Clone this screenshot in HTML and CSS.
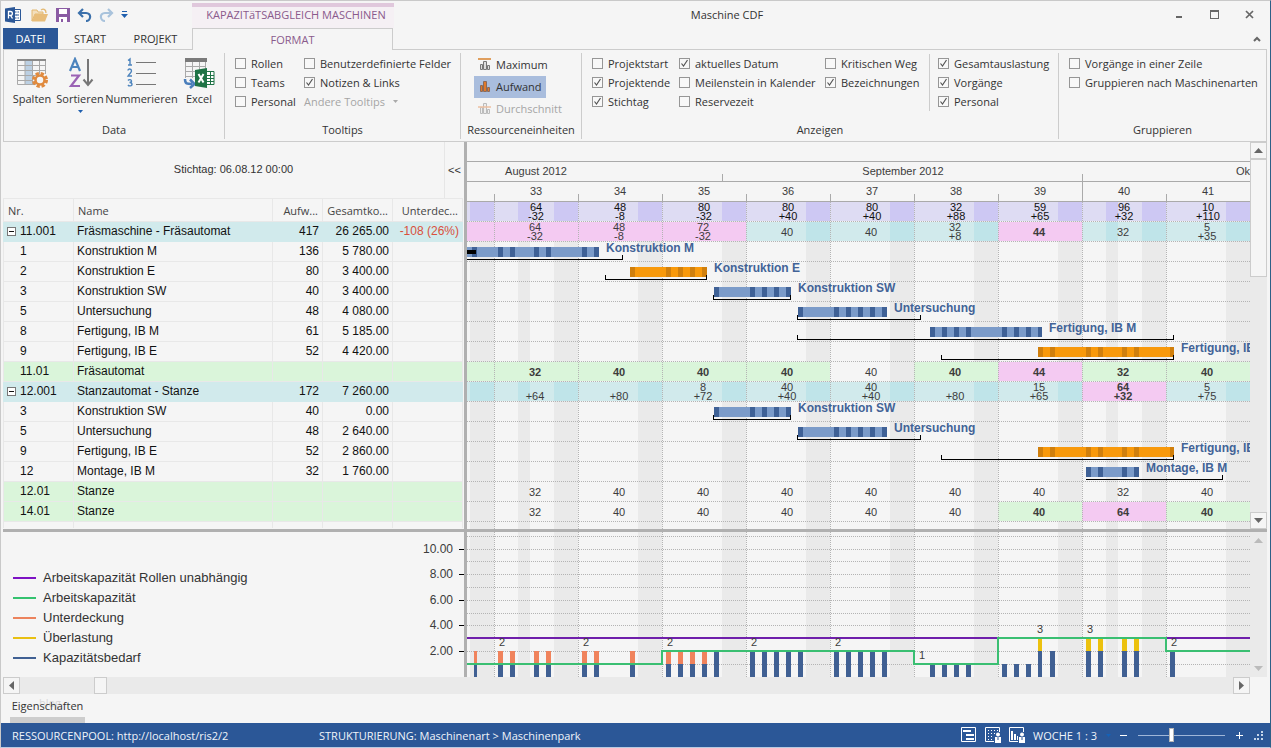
FILE: index.html
```
<!DOCTYPE html>
<html lang="de">
<head>
  <meta charset="UTF-8" />
  <meta name="viewport" content="width=device-width, initial-scale=1.0"/>
  <title>Maschine CDF</title>
  <link rel="stylesheet" href="styles.css">
</head>
<body>
  <header class="titlebar">
    <div class="quick-access">
      <button class="quick" aria-label="Rillsoft">
        <svg width="16" height="16" viewBox="0 0 16 16"><path d="M9 2.5h6.5v11H9" fill="#fff" stroke="#2b5797"/><path d="M10 5h1.500M12.500 5H14M10 8h1.500M11 8h3M10 11h1.500M12.500 11H14" stroke="#2b5797"/><path d="M0 1.500 10 0v16L0 14.500z" fill="#2b5797"/><path d="M3.500 11.500v-7h2a1.800 1.800 0 0 1 0 3.800h-2M5.500 8.300l2 3.200" fill="none" stroke="#fff" stroke-width="1.300"/></svg>
      </button>
      <button class="quick" aria-label="Öffnen">
        <svg width="18" height="16" viewBox="0 0 18 16"><path d="M1 14V3h5l1 2h5v2H4z" fill="#f3dfbd" stroke="#e3b871"/><path d="M1 14.500 4 7h13l-3 7.500z" fill="#e8bd7a"/><path d="M10 3c3-2 5 0 5 3" fill="none" stroke="#e3b871" stroke-width="1.300"/></svg>
      </button>
      <button class="quick" aria-label="Speichern">
        <svg width="14" height="14" viewBox="0 0 14 14"><path d="M0 0h14v14H0z" fill="#8a5ba3"/><path d="M3 1h8v5H3zM3 9h8v5H3z" fill="#fff"/><path d="M5 11h2v3H5z" fill="#8a5ba3"/></svg>
      </button>
      <button class="quick" aria-label="Rückgängig">
        <svg width="15" height="14" viewBox="0 0 15 14"><path d="M6 1 2 5l4 4M2 5h7c6 0 5 8 0 8" fill="none" stroke="#3b70ab" stroke-width="2.200"/></svg>
      </button>
      <button class="quick" aria-label="Wiederholen">
        <svg width="15" height="14" viewBox="0 0 15 14"><path d="M9 1l4 4-4 4M13 5H6C0 5 1 13 6 13" fill="none" stroke="#a9c3dc" stroke-width="2.200"/></svg>
      </button>
      <button class="quick" aria-label="Anpassen">
        <svg width="7" height="7" viewBox="0 0 7 7"><path d="M1 0h5v1H1zM0 3h7L3.500 7z" fill="#1f5fae"/></svg>
      </button>
    </div>
    <div class="context-title">KAPAZITäTSABGLEICH MASCHINEN</div>
    <h1>Maschine CDF</h1>
    <div class="window-buttons">
      <button aria-label="Minimieren"><svg width="9" height="9"><path d="M1 6h6v2H1z" fill="#666"/></svg></button>
      <button aria-label="Maximieren"><svg width="9" height="9"><path d="M0 0h9v9H0zM1 2v6h7V2z" fill="#666" fill-rule="evenodd"/></svg></button>
      <button aria-label="Schließen"><svg width="9" height="9"><path d="M1 1l7 7M8 1 1 8" stroke="#666" stroke-width="1.700"/></svg></button>
    </div>
  </header>

  <nav class="tabs">
    <button class="tab file">DATEI</button>
    <button class="tab start">START</button>
    <button class="tab project">PROJEKT</button>
    <button class="tab active">FORMAT</button>
    <button class="collapse" aria-label="Menüband reduzieren"><svg width="8" height="6"><path d="M1 5l3-3 3 3" fill="none" stroke="#666" stroke-width="2"/></svg></button>
  </nav>

  <section class="ribbon">
    <div class="group data">
      <div class="tools">
        <button class="big">
          <svg width="32" height="32" viewBox="0 0 32 32"><path d="M9 3h7v25H9z" fill="#bcd0e3"/><path d="M1.500 3v24.500h19M1 8.500h29M1 13.500h29M1 18.500h20M1 23.500h16M9 3v25M16.500 3v25M23.500 3v14M29.500 3v14" fill="none" stroke="#a9a9a9"/><path d="M1 2h29v2H1z" fill="#8a8a8a"/><circle cx="24" cy="23" r="6" fill="#f5f5f5" stroke="#e08a3e" stroke-width="4" stroke-dasharray="3 1.700"/><circle cx="24" cy="23" r="4.500" fill="#f5f5f5" stroke="#e08a3e" stroke-width="2.500"/></svg>
          <span>Spalten</span>
        </button>
        <button class="big">
          <svg width="32" height="32" viewBox="0 0 32 32"><path d="M6 14 11 2l5 12M8 10h6" fill="none" stroke="#4d84bd" stroke-width="2.200"/><path d="M7 18.500h8L7 29h9" fill="none" stroke="#9b63b5" stroke-width="2.200"/><path d="M24 2v26M19.500 22.500 24 28l4.500-5.500" fill="none" stroke="#777" stroke-width="2"/></svg>
          <span>Sortieren</span>
          <svg width="5" height="3"><path d="M0 0h5L2.500 3z" fill="#1f5fae"/></svg>
        </button>
        <button class="big">
          <svg width="32" height="32" viewBox="0 0 32 32"><g fill="none" stroke="#4d84bd" stroke-width="1.400"><path d="M2 3.500 4 2v6M2 8h4M2 13.500c0-2 3.500-2 3.500.500 0 1.500-2 2.500-3.500 5h4M2 23.500c1-1.500 3.500-1 3.500.500s-1 1.500-2 1.500c1 0 2.500.500 2.500 2s-3 2-4 .500"/></g><path d="M10 5.500h20M10 16.500h20M10 27.500h20" stroke="#777"/></svg>
          <span>Nummerieren</span>
        </button>
        <button class="big">
          <svg width="32" height="32" viewBox="0 0 32 32"><path d="M2.500 4v17M9.500 4v17M16.500 4v10M22.500 4v8M2 9.500h21M2 14.500h14M2 19.500h10" stroke="#a9a9a9"/><path d="M2 1h22v4H2z" fill="#7a7a7a"/><path d="M2 22c0 5 2 5 7 5M7 22.500l4.500 4.500L7 31" fill="none" stroke="#4a7ebb" stroke-width="2.500"/><path d="M23 14.500h8v13h-8z" fill="#fff" stroke="#1f7346"/><path d="M23 18.500h8M23 21.500h8M23 24.500h8M27.500 14v14" stroke="#1f7346"/><path d="M12 13l12-2v20l-12-2z" fill="#1f7346"/><path d="M15.500 17l5 8.500M20.500 17l-5 8.500" stroke="#fff" stroke-width="2"/></svg>
          <span>Excel</span>
        </button>
      </div>
      <h2>Data</h2>
    </div>

    <div class="group tooltips">
      <div class="checks">
        <label><input type="checkbox">Rollen</label>
        <label><input type="checkbox">Benutzerdefinierte Felder</label>
        <label><input type="checkbox">Teams</label>
        <label><input type="checkbox" checked>Notizen &amp; Links</label>
        <label><input type="checkbox">Personal</label>
        <button class="other" disabled>Andere Tooltips <svg width="5" height="3"><path d="M0 0h5L2.500 3z" fill="#aaa"/></svg></button>
      </div>
      <h2>Tooltips</h2>
    </div>

    <div class="group units">
      <div class="unit-list">
        <button class="unit"><svg width="14" height="14" viewBox="0 0 14 14"><path d="M2.500 7.500h2v5h-2zM5.500 4.500h3v8h-3zM9.500 8.500h2v4h-2z" fill="#ddd" stroke="#777"/><path d="M0 2h13" stroke="#d9822b" stroke-width="1.500"/></svg>Maximum</button>
        <button class="unit selected"><svg width="14" height="14" viewBox="0 0 14 14"><path d="M2.500 6.500h2v6h-2zM5.500 2.500h3v10h-3zM9.500 8.500h2v4h-2z" fill="#e0792a" stroke="#8a6a5a"/></svg>Aufwand</button>
        <button class="unit" disabled><svg width="14" height="14" viewBox="0 0 14 14"><path d="M2.500 6.500h2v6h-2zM5.500 2.500h3v10h-3zM9.500 8.500h2v4h-2z" fill="#eee" stroke="#bbb"/><path d="M0 6h13" stroke="#ecbfa0" stroke-width="1.500"/></svg>Durchschnitt</button>
      </div>
      <h2>Ressourceneinheiten</h2>
    </div>

    <div class="group show">
      <div class="checks">
        <label><input type="checkbox">Projektstart</label>
        <label><input type="checkbox" checked>aktuelles Datum</label>
        <label><input type="checkbox">Kritischen Weg</label>
        <label class="split"><input type="checkbox" checked>Gesamtauslastung</label>
        <label><input type="checkbox" checked>Projektende</label>
        <label><input type="checkbox">Meilenstein in Kalender</label>
        <label><input type="checkbox" checked>Bezeichnungen</label>
        <label class="split"><input type="checkbox" checked>Vorgänge</label>
        <label><input type="checkbox" checked>Stichtag</label>
        <label><input type="checkbox">Reservezeit</label>
        <span></span>
        <label class="split"><input type="checkbox" checked>Personal</label>
      </div>
      <h2>Anzeigen</h2>
    </div>

    <div class="group grouping">
      <div class="checks">
        <label><input type="checkbox">Vorgänge in einer Zeile</label>
        <label><input type="checkbox">Gruppieren nach Maschinenarten</label>
      </div>
      <h2>Gruppieren</h2>
    </div>
  </section>

  <main class="workspace">
    <section class="sheet">
      <div class="key-date">
        <span>Stichtag: 06.08.12 00:00</span>
        <button>&lt;&lt;</button>
      </div>
      <table>
        <colgroup>
          <col class="col-nr"><col><col class="col-effort"><col class="col-cost"><col class="col-cost">
        </colgroup>
        <thead>
          <tr><th>Nr.</th><th>Name</th><th class="num">Aufw...</th><th class="num">Gesamtko...</th><th class="num">Unterdec...</th></tr>
        </thead>
        <tbody>
          <tr class="machine"><td><button class="toggle" aria-label="Zuklappen"></button>11.001</td><td>Fräsmaschine - Fräsautomat</td><td>417</td><td>26 265.00</td><td class="short">-108 (26%)</td></tr>
          <tr><td>1</td><td>Konstruktion M</td><td>136</td><td>5 780.00</td><td></td></tr>
          <tr><td>2</td><td>Konstruktion E</td><td>80</td><td>3 400.00</td><td></td></tr>
          <tr><td>3</td><td>Konstruktion SW</td><td>40</td><td>3 400.00</td><td></td></tr>
          <tr><td>5</td><td>Untersuchung</td><td>48</td><td>4 080.00</td><td></td></tr>
          <tr><td>8</td><td>Fertigung, IB M</td><td>61</td><td>5 185.00</td><td></td></tr>
          <tr><td>9</td><td>Fertigung, IB E</td><td>52</td><td>4 420.00</td><td></td></tr>
          <tr class="person"><td>11.01</td><td>Fräsautomat</td><td></td><td></td><td></td></tr>
          <tr class="machine"><td><button class="toggle" aria-label="Zuklappen"></button>12.001</td><td>Stanzautomat - Stanze</td><td>172</td><td>7 260.00</td><td></td></tr>
          <tr><td>3</td><td>Konstruktion SW</td><td>40</td><td>0.00</td><td></td></tr>
          <tr><td>5</td><td>Untersuchung</td><td>48</td><td>2 640.00</td><td></td></tr>
          <tr><td>9</td><td>Fertigung, IB E</td><td>52</td><td>2 860.00</td><td></td></tr>
          <tr><td>12</td><td>Montage, IB M</td><td>32</td><td>1 760.00</td><td></td></tr>
          <tr class="person"><td>12.01</td><td>Stanze</td><td></td><td></td><td></td></tr>
          <tr class="person"><td>14.01</td><td>Stanze</td><td></td><td></td><td></td></tr>
          <tr class="rest"><td></td><td></td><td></td><td></td><td></td></tr>
        </tbody>
      </table>
    </section>

    <section class="gantt"><svg id="gantt" width="100%" height="387"></svg></section>
    <div class="vscroll">
      <button aria-label="Nach oben"><svg width="9" height="5"><path d="M0 5h9L4.500 0z" fill="#666"/></svg></button>
      <div class="vthumb"></div>
      <button class="last" aria-label="Nach unten"><svg width="9" height="5"><path d="M0 0h9L4.500 5z" fill="#666"/></svg></button>
    </div>

    <section class="legend">
      <ul>
        <li><i class="line roles"></i>Arbeitskapazität Rollen unabhängig</li>
        <li><i class="line capacity"></i>Arbeitskapazität</li>
        <li><i class="line shortage"></i>Unterdeckung</li>
        <li><i class="line overload"></i>Überlastung</li>
        <li><i class="line demand"></i>Kapazitätsbedarf</li>
      </ul>
      <svg id="axis" width="60" height="145"></svg>
    </section>
    <section class="histogram"><svg id="histogram" width="100%" height="145"></svg></section>
    <div class="vscroll idle">
      <button aria-label="Nach oben" disabled><svg width="9" height="5"><path d="M0 5h9L4.500 0z" fill="#bbb"/></svg></button>
      <button class="last" aria-label="Nach unten" disabled><svg width="9" height="5"><path d="M0 0h9L4.500 5z" fill="#bbb"/></svg></button>
    </div>
  </main>

  <div class="hscroll">
    <button aria-label="Nach links"><svg width="5" height="9"><path d="M5 0v9L0 4.500z" fill="#666"/></svg></button>
    <div class="hthumb"></div>
    <button class="last" aria-label="Nach rechts"><svg width="5" height="9"><path d="M0 0v9l5-4.500z" fill="#666"/></svg></button>
  </div>

  <div class="dock">
    <span class="ghost">blog</span>
    <button>Eigenschaften</button>
  </div>

  <footer class="status">
    <span class="pool">RESSOURCENPOOL: http://localhost/ris2/2</span>
    <span class="structure">STRUKTURIERUNG: Maschinenart &gt; Maschinenpark</span>
    <button aria-label="Balkenplan"><svg width="16" height="16"><path d="M.500.500h14v14H.500z" fill="none" stroke="#fff"/><path d="M2 3h8v2H2zM5 7h8v2H5zM5 11h8v2H5z" fill="#fff"/></svg></button>
    <button aria-label="Auslastung"><svg width="16" height="16"><path d="M14.500 5V.500H.500v14H9" fill="none" stroke="#fff"/><path d="M3 3.500h10M3 6.500h8M3 9.500h6M3 12.500h6" stroke="#fff" stroke-dasharray="1 2"/><circle cx="13" cy="7.500" r="2" fill="#fff"/><path d="M10 10h6v6h-6z" fill="#fff"/><path d="M12.500 10h1v3h-1z" fill="#2b5797"/></svg></button>
    <button aria-label="Histogramm"><svg width="16" height="16"><path d="M14.500 5V.500H.500v14H9" fill="none" stroke="#fff"/><path d="M2 4h2v9H2zM5 7h2v6H5zM8 9h1v4H8z" fill="#fff"/><circle cx="13" cy="7.500" r="2" fill="#fff"/><path d="M10 10h6v6h-6z" fill="#fff"/><path d="M12.500 10h1v3h-1z" fill="#2b5797"/></svg></button>
    <label class="scale" for="zoom">WOCHE 1 : 3</label>
    <svg class="scale-arrow" width="5" height="3"><path d="M0 0h5L2.500 3z" fill="#1462b8"/></svg>
    <button class="step" aria-label="Verkleinern"><svg width="7" height="7"><path d="M0 3h7v1H0z" fill="#fff"/></svg></button>
    <input type="range" id="zoom" min="0" max="100" value="38">
    <button class="step" aria-label="Vergrößern"><svg width="7" height="7"><path d="M0 3h7v1H0zM3 0h1v7H3z" fill="#fff"/></svg></button>
    <svg class="grip" width="9" height="9"><path d="M7 0h2v2H7zM3 3h2v2H3zM7 3h2v2H7zM0 7h2v2H0zM3 7h2v2H3zM7 7h2v2H7z" fill="#c5d5ea"/></svg>
  </footer>

  <script src="script.js"></script>
</body>
</html>
```
FILE: styles.css
```
* {
  box-sizing: border-box;
}

body {
  display: flex;
  flex-direction: column;
  min-height: 100vh;
  margin: 0;
  padding-right: 3px;
  border-top: 1px solid #c9c9c9;
  border-left: 1px solid #c9c9c9;
  border-right: 1px solid #2d6087;
  border-bottom: 1px solid #b9cbe2;
  background-color: #f5f5f5;
  color: #333;
  font-family: "Open Sans", "Noto Sans", sans-serif;
  font-size: 11px;
}

button {
  padding: 0;
  border: none;
  background: none;
  color: inherit;
  font: inherit;
}

h1, h2 {
  margin: 0;
  font-size: 11px;
  font-weight: normal;
}

svg {
  display: block;
  flex: none;
}

/* title bar */

.titlebar {
  display: flex;
  height: 27px;
}

.quick-access {
  display: flex;
  align-items: center;
  gap: 7px;
  width: 191px;
  padding-left: 4px;
}

.quick:first-child {
  margin-right: 3px;
}

.context-title {
  width: 202px;
  margin-top: 2px;
  padding-left: 6px;
  border-top: 4px solid #e0c8dc;
  background-color: #f5f0f4;
  color: #8a5a8c;
  line-height: 16px;
  text-align: center;
}

.titlebar h1 {
  flex: 1;
  padding-right: 102px;
  line-height: 28px;
  text-align: center;
}

.window-buttons {
  display: flex;
}

.window-buttons button {
  display: flex;
  align-items: center;
  justify-content: center;
  width: 35px;
}

/* tabs */

.tabs {
  display: flex;
  height: 21px;
  padding-left: 2px;
}

.tab {
  line-height: 21px;
}

.file {
  width: 55px;
  background-color: #2b5797;
  color: #fff;
}

.start {
  width: 64px;
}

.project {
  width: 67px;
}

.tab.active {
  z-index: 1;
  width: 201px;
  height: 22px;
  margin-left: 3px;
  border: 1px solid #ccc;
  border-bottom: none;
  background-color: #f5f5f5;
  color: #8a5a8c;
  line-height: 20px;
}

.collapse {
  margin-left: auto;
  padding-right: 6px;
}

/* ribbon */

.ribbon {
  display: flex;
  height: 93px;
  margin-left: 2px;
  padding-top: 3px;
  border: 1px solid #ccc;
}

.group {
  display: flex;
  flex-direction: column;
  justify-content: space-between;
  height: 86px;
  padding-bottom: 1px;
  border-right: 1px solid #ccc;
}

.group h2 {
  line-height: 17px;
  text-align: center;
}

.data {
  width: 221px;
}

.tooltips {
  width: 236px;
}

.units {
  width: 121px;
}

.show {
  width: 477px;
}

.grouping {
  flex: 1;
  border-right: none;
}

.tools {
  display: grid;
  grid-template-columns: 48px 48px 75px 40px;
  padding: 4px 0 0 4px;
}

.big {
  display: flex;
  flex-direction: column;
  align-items: center;
  line-height: 15px;
}

.big span {
  margin: 2px 0 4px;
  white-space: nowrap;
}

.checks {
  display: grid;
  grid-auto-rows: 19px;
  padding: 1px 0 0 10px;
}

.tooltips .checks {
  grid-template-columns: 69px 1fr;
}

.show .checks {
  grid-template-columns: 87px 146px 104px 1fr;
}

.checks label {
  display: flex;
  align-items: center;
  gap: 5px;
  white-space: nowrap;
}

.split {
  padding-left: 8px;
  border-left: 1px solid #ccc;
}

.checks input {
  flex: none;
  width: 11px;
  height: 11px;
  margin: 0;
  border: 1px solid #969696;
  background-color: #f8f8f8;
  appearance: none;
}

.checks input:checked {
  background-image: url("data:image/svg+xml,%3Csvg xmlns='http://www.w3.org/2000/svg' width='9' height='9'%3E%3Cpath d='M1.500 4.500l2 2.500 4-6' fill='none' stroke='%23555' stroke-width='1.200'/%3E%3C/svg%3E");
}

.other {
  display: flex;
  align-items: center;
  gap: 8px;
  color: #a5a5a5;
}

.unit-list {
  display: flex;
  flex-direction: column;
  align-items: flex-start;
  padding: 1px 0 0 13px;
}

.unit {
  display: flex;
  align-items: center;
  gap: 4px;
  height: 22px;
  padding: 0 4px 2px;
}

.unit.selected {
  background-color: #a9bddd;
}

.unit:disabled {
  color: #a5a5a5;
}

/* plan area */

.workspace {
  display: grid;
  grid-template-columns: 464px 1fr 17px;
  margin-left: 2px;
  font-family: "Liberation Sans", Arial, sans-serif;
}

.sheet, .legend {
  border-right: 3px solid #b0b0b0;
}

.sheet, .gantt, .workspace > .vscroll:nth-child(3) {
  border-bottom: 3px solid #b0b0b0;
}

.gantt, .histogram {
  min-width: 0;
  overflow: hidden;
}

.key-date {
  display: flex;
  height: 56px;
}

.key-date span {
  flex: 1;
  padding-left: 20px;
  line-height: 55px;
  text-align: center;
}

.key-date button {
  width: 20px;
  border-left: 1px solid #e6e6e6;
}

table {
  width: 460px;
  border-collapse: collapse;
  table-layout: fixed;
  color: #111;
  font-size: 12px;
}

.col-nr {
  width: 70px;
}

.col-effort {
  width: 50px;
}

.col-cost {
  width: 70px;
}

th, td {
  height: 20px;
  padding: 0 3px;
  border: 1px solid #e8e8e8;
  line-height: 19px;
  white-space: nowrap;
}

th {
  height: 23px;
  padding: 0 4px;
  color: #444;
  font-family: "Open Sans", "Noto Sans", sans-serif;
  font-size: 11px;
  font-weight: normal;
  text-align: left;
}

td:first-child {
  padding-left: 16px;
}

td:nth-child(n+3), .num {
  text-align: right;
}

.machine td {
  border-color: #d1eaec;
  background-color: #d1eaec;
}

.machine td:first-child {
  padding-left: 3px;
}

.machine .short {
  color: #d9503c;
}

.person td {
  background-color: #daf5da;
}

.rest td {
  height: 6px;
  border-bottom: none;
  line-height: 5px;
}

.toggle {
  width: 9px;
  height: 9px;
  margin-right: 4px;
  border: 1px solid #777;
  background: linear-gradient(#111, #111) center / 5px 1px no-repeat #fff;
}

/* charts */

svg text {
  fill: #3c3c3c;
  font-family: "Liberation Sans", Arial, sans-serif;
  font-size: 11px;
}

svg .mid {
  text-anchor: middle;
}

svg .strong {
  font-weight: bold;
}

svg .total {
  fill: #111;
}

svg .task {
  fill: #426397;
  font-size: 12px;
  font-weight: bold;
}

svg .axis {
  font-size: 12px;
  text-anchor: end;
}

.legend {
  display: flex;
  justify-content: space-between;
}

.legend ul {
  margin: 0;
  padding: 36px 0 0 10px;
  font-size: 13px;
  line-height: 20px;
  list-style: none;
}

.legend li {
  display: flex;
  align-items: center;
  gap: 7px;
}

.line {
  width: 23px;
  height: 2px;
}

.roles {
  background-color: #7d12c4;
}

.capacity {
  background-color: #34c26f;
}

.shortage {
  background-color: #ec835d;
}

.overload {
  background-color: #e8c012;
}

.demand {
  background-color: #406093;
}

/* scroll bars */

.vscroll, .hscroll {
  display: flex;
  background-color: #eaeaea;
}

.vscroll {
  flex-direction: column;
}

.vscroll button, .hscroll button {
  display: flex;
  align-items: center;
  justify-content: center;
  width: 17px;
  height: 17px;
  border: 1px solid #ccc;
  background-color: #f5f5f5;
}

.vthumb {
  height: 118px;
  border: 1px solid #ccc;
  background-color: #f5f5f5;
}

.vscroll .last {
  margin-top: auto;
}

.vscroll.idle button {
  border: none;
  background: none;
}

.hscroll {
  margin: 0 17px 0 2px;
}

.hthumb {
  width: 13px;
  margin-left: 74px;
  border: 1px solid #ccc;
  background-color: #f5f5f5;
}

.hscroll .last {
  margin-left: auto;
}

.dock {
  position: relative;
  display: flex;
  height: 29px;
  padding-left: 9px;
}

.dock button {
  position: relative;
  width: 75px;
  border-bottom: 6px solid #cdcdcd;
}

.ghost {
  position: absolute;
  top: 0;
  left: 38px;
  color: #d8d8d8;
  line-height: 18px;
}

/* status bar */

.status {
  display: flex;
  align-items: center;
  height: 24px;
  margin: auto -3px 0 0;
  padding: 0 7px 0 11px;
  background-color: #2b5797;
  color: #f0f4fa;
}

.pool {
  width: 307px;
}

.structure {
  flex: 1;
}

.status button {
  margin-right: 8px;
}

.scale-arrow {
  margin: 0 9px;
}

.status .step {
  margin-right: 11px;
}

#zoom {
  width: 87px;
  height: 14px;
  margin: 0 11px 0 0;
  background: linear-gradient(#9fb6d8, #9fb6d8) center / 100% 1px no-repeat;
  appearance: none;
}

#zoom::-webkit-slider-thumb {
  width: 5px;
  height: 14px;
  border: 1px solid #b5b5b5;
  background-color: #fff;
  appearance: none;
}
```
FILE: script.js
```
// all x values are pixels from the left edge of the time scale, one day = 12px
const DAY = 12;
const WEEK = 84;
const FIRST = 27;      // start of week 33
const TOP = 60;        // first row below the scale
const ROW = 20;
const HOLIDAYS = [51, 639];

const COLORS = {
  total: ['#dedcf3', '#cdc8f3'],
  teal: ['#d1eaec', '#bfe4e9'],
  pink: ['#f4caf2', '#f4caf2'],
  green: ['#daf5da', '#daf5da'],
  blue: ['#7b9bc9', '#3f6196'],
  orange: ['#f8990b', '#d07f0c']
};

function rect(x, y, w, h, fill) {
  return `<rect x="${x}" y="${y}" width="${w}" height="${h}" fill="${fill}"/>`;
}

function dots(x1, y1, x2, y2) {
  return `<path d="M${x1} ${y1}L${x2} ${y2}" stroke="#b4b4b4" stroke-dasharray="1 1" shape-rendering="crispEdges"/>`;
}

function text(x, y, value, cls) {
  return `<text x="${x}" y="${y}" class="${cls}">${value}</text>`;
}

// free days that fall into the week which starts at x
function freeDays(x) {
  const days = [[x + 5 * DAY, 2 * DAY]];
  HOLIDAYS.filter(h => h > x && h < x + WEEK).forEach(h => days.push([h, DAY]));
  return days;
}

function calendar(y, height) {
  let out = '';
  for (let x = FIRST - WEEK; x < FIRST + 9 * WEEK; x += WEEK) {
    freeDays(x).forEach(([fx, w]) => out += rect(fx, y, w, height, '#eaeaea'));
  }
  return out;
}

function weekLines(y, height) {
  let out = '';
  for (let x = FIRST; x <= FIRST + 9 * WEEK; x += WEEK) out += dots(x + 0.5, y, x + 0.5, y + height);
  return out;
}

// one entry per week from 32 on: [color, upper, lower, bold]
const loads = {
  0: [['total'], ['total', '64', '-32'], ['total', '48', '-8'], ['total', '80', '-32'], ['total', '80', '+40'], ['total', '80', '+40'], ['total', '32', '+88'], ['total', '59', '+65'], ['total', '96', '+32'], ['total', '10', '+110']],
  1: [['pink'], ['pink', '64', '-32'], ['pink', '48', '-8'], ['pink', '72', '-32'], ['teal', '40'], ['teal', '40'], ['teal', '32', '+8'], ['pink', '44', null, true], ['teal', '32'], ['teal', '5', '+35']],
  8: [['green'], ['green', '32', null, true], ['green', '40', null, true], ['green', '40', null, true], ['green', '40', null, true], ['', '40'], ['green', '40', null, true], ['pink', '44', null, true], ['green', '32', null, true], ['green', '40', null, true]],
  9: [['teal'], ['teal', '', '+64'], ['teal', '', '+80'], ['teal', '8', '+72'], ['teal', '40', '+40'], ['teal', '40', '+40'], ['teal', '', '+80'], ['teal', '15', '+65'], ['pink', '64', '+32', true], ['teal', '5', '+75']],
  14: [[''], ['', '32'], ['', '40'], ['', '40'], ['', '40'], ['', '40'], ['', '40'], ['', '40'], ['', '32'], ['', '40']],
  15: [[''], ['', '32'], ['', '40'], ['', '40'], ['', '40'], ['', '40'], ['', '40'], ['green', '40', null, true], ['pink', '64', null, true], ['green', '40', null, true]]
};

const sw = { name: 'Konstruktion SW', color: 'blue', from: 247, to: 324, dark: [247, 283, 295, 307, 319], span: [246, 324] };
const test = { name: 'Untersuchung', color: 'blue', from: 331, to: 420, dark: [331, 367, 379, 391, 403, 415], span: [330, 454] };
const ibe = { name: 'Fertigung, IB E', color: 'orange', from: 571, to: 707, dark: [571, 583, 619, 631, 655, 667, 703], span: [474, 707] };

const tasks = {
  2: { name: 'Konstruktion M', color: 'blue', from: 0, to: 132, dark: [5, 31, 43, 67, 79, 115, 127], span: [-5, 156], done: 9 },
  3: { name: 'Konstruktion E', color: 'orange', from: 163, to: 240, dark: [163, 199, 211, 223, 235], span: [138, 240] },
  4: sw,
  5: test,
  6: { name: 'Fertigung, IB M', color: 'blue', from: 463, to: 575, dark: [463, 475, 487, 499, 535, 547, 559, 571], span: [330, 707] },
  7: ibe,
  10: sw,
  11: test,
  12: ibe,
  13: { name: 'Montage, IB M', color: 'blue', from: 619, to: 672, dark: [619, 631, 655, 667], span: [619, 756], open: true }
};

function drawLoads(row, weeks) {
  const y = TOP + row * ROW;
  let out = '';
  weeks.forEach(([color], i) => {
    if (!color) return;
    const x = FIRST + (i - 1) * WEEK;
    out += rect(x, y, WEEK, ROW - 1, COLORS[color][0]);
    freeDays(x).forEach(([fx, w]) => out += rect(fx, y, w, ROW - 1, COLORS[color][1]));
  });
  return out;
}

function drawLoadTexts(row, weeks) {
  const y = TOP + row * ROW;
  let out = '';
  weeks.forEach(([color, upper, lower, bold], i) => {
    const x = FIRST + (i - 1) * WEEK + (row === 0 ? 42 : 41);
    const cls = 'mid' + (bold ? ' strong' : '') + (row === 0 ? ' total' : '');
    if (upper) out += text(x, y + (lower ? 9 : 14), upper, cls);
    if (lower) out += text(x, y + 18, lower, cls);
  });
  return out;
}

function drawTask(row, t) {
  const y = TOP + row * ROW;
  const [light, dark] = COLORS[t.color];
  const [from, to] = t.span;
  let out = rect(t.from, y + 5, t.to - t.from, 10, light);
  t.dark.forEach(x => out += rect(x, y + 5, Math.min(5, t.to - x), 10, dark));
  if (t.done) out += rect(0, y + 8, t.done, 4, '#000');
  out += rect(from, y + 17, to - from, 1, '#000');
  if (!t.open) out += rect(from, y + 13, 1, 4, '#000');
  out += rect(to - 1, y + 13, 1, 4, '#000');
  return out + text(t.to + 7, y + 10, t.name, 'task');
}

function drawGantt() {
  let out = calendar(TOP, 327);
  for (const row in loads) out += drawLoads(+row, loads[row]);
  for (let r = 0; r < 16; r++) out += dots(0, TOP + r * ROW + 19.5, 783, TOP + r * ROW + 19.5);
  out += weekLines(TOP, 327);

  // time scale
  [19, 39, 59].forEach(y => out += rect(0, y, 783, 1, '#aaa'));
  out += rect(255, 32, 1, 7, '#aaa') + rect(615, 32, 1, 27, '#aaa');
  out += text(69, 33, 'August 2012', 'mid') + text(436, 33, 'September 2012', 'mid') + text(769, 33, 'Oktober 2012', '');
  for (let i = 0; i < 9; i++) {
    out += rect(FIRST + i * WEEK, 52, 1, 7, '#aaa');
    out += text(FIRST + i * WEEK + 42, 53, 33 + i, 'mid');
  }

  for (const row in loads) out += drawLoadTexts(+row, loads[row]);
  for (const row in tasks) out += drawTask(+row, tasks[row]);
  document.getElementById('gantt').innerHTML = out;
}

// y of the grid lines 11 ... 1
const levels = [4, 17, 29, 42, 55, 68, 81, 93, 106, 119, 132];
const levelY = n => n ? levels[11 - n] : 145;

// [x, demand, kind of the part above the demand, width]
const columns = [
  [7, 1, 'short', 3], [31, 1, 'short'], [43, 1, 'short'], [67, 1, 'short'], [79, 1, 'short'],
  [115, 1, 'short'], [127, 1, 'short'], [163, 1, 'short'],
  [199, 1, 'short'], [211, 1, 'short'], [223, 1, 'short'], [235, 1, 'short'], [247, 2],
  [283, 2], [295, 2], [307, 2], [319, 2], [331, 2],
  [367, 2], [379, 2], [391, 2], [403, 2], [415, 2],
  [463, 1], [475, 1], [487, 1], [499, 1],
  [535, 1], [547, 1], [559, 1], [571, 2, 'over', 4], [583, 2],
  [619, 2, 'over'], [631, 2, 'over'], [655, 2, 'over'], [667, 2, 'over'], [703, 2]
];

function drawHistogram() {
  let out = calendar(0, 145);
  levels.forEach(y => out += dots(0, y + 0.5, 783, y + 0.5));
  out += weekLines(0, 145);
  columns.forEach(([x, n, kind, w = 5]) => {
    out += rect(x, levelY(n), w, 145 - levelY(n), '#406093');
    if (kind) out += rect(x, levelY(n + 1), w, levelY(n) - levelY(n + 1), kind === 'short' ? '#f0835c' : '#ecc10e');
  });
  out += rect(0, 105, 783, 2, '#6f1fab');
  out += '<path d="M0 132H195V119H447V132H531V106H699V119H783" fill="none" stroke="#3abf72" stroke-width="2"/>';
  [[32, 114, 2], [116, 114, 2], [200, 114, 2], [284, 114, 2], [368, 114, 2], [452, 127, 1], [570, 101, 3], [620, 101, 3], [704, 114, 2]]
    .forEach(([x, y, n]) => out += text(x, y, n, ''));
  document.getElementById('histogram').innerHTML = out;

  let axis = '';
  for (let n = 2; n <= 10; n += 2) {
    axis += text(49, levelY(n) + 4, n + '.00', 'axis') + rect(55, levelY(n), 5, 1, '#000');
  }
  document.getElementById('axis').innerHTML = axis;
}

drawGantt();
drawHistogram();
```
